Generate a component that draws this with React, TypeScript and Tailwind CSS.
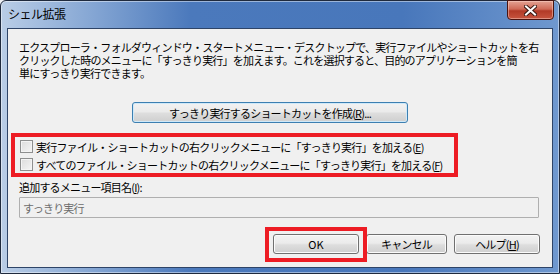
export default function App() {
  const font = "font-['MS_UI_Gothic','Noto_Sans_CJK_JP',sans-serif]";
  const btn =
    "h-[20px] rounded-[3px] border border-[#707070] bg-[linear-gradient(180deg,#f2f2f2_0%,#ebebeb_45%,#dddddd_55%,#cfcfcf_100%)] shadow-[inset_0_0_0_1px_#fbfbfb] leading-[12px] whitespace-nowrap";
  return (
    <div className={`w-[560px] h-[274px] bg-[#eef0f4] ${font}`}>
      {/* window frame */}
      <div className="relative h-full rounded-t-[6px] border border-[#1f2a3d] bg-[linear-gradient(90deg,#b9cde6_0%,#86a7d4_16%,#4b79bc_34%,#4877bb_72%,#6f98cf_100%)] shadow-[inset_0_0_0_1px_rgba(255,255,255,0.45)] flex flex-col">
        {/* title bar */}
        <div className="h-[27px] flex items-start shrink-0">
          <span className="pl-[7px] pt-[6px] text-[12px] leading-[14px] tracking-[-0.5px] text-black">シェル拡張</span>
          <div className="ml-auto mr-[5px] -mt-px w-[47px] h-[20px] rounded-b-[4px] border border-[#4a1410] bg-[linear-gradient(180deg,#e3a293_0%,#cf6a57_45%,#b23a27_55%,#c7553f_100%)] shadow-[inset_0_0_0_1px_rgba(255,220,210,0.45)] flex items-center justify-center">
            <svg width="13" height="11" viewBox="0 0 13 11">
              <path d="M2 1.5 L11 9.5 M11 1.5 L2 9.5" stroke="#3b1a14" strokeWidth="4" strokeLinecap="square" />
              <path d="M2 1.5 L11 9.5 M11 1.5 L2 9.5" stroke="#ffffff" strokeWidth="2" strokeLinecap="square" />
            </svg>
          </div>
        </div>

        {/* client area */}
        <div className="flex-1 mx-[6px] mb-[5px] border border-[#2e4467] bg-[#f0f0f0] text-[11px] tracking-[-0.8px] text-black flex flex-col">
          <p className="pl-[11px] pt-[12px] leading-[13px] whitespace-nowrap">
            エクスプローラ・フォルダウィンドウ・スタートメニュー・デスクトップで、実行ファイルやショートカットを右
            <br />
            クリックした時のメニューに「すっきり実行」を加えます。これを選択すると、目的のアプリケーションを簡
            <br />
            単にすっきり実行できます。
          </p>

          <div className="pl-[124px] mt-[22px]">
            <button className="w-[276px] h-[21px] rounded-[3px] border border-[#3c7fb1] bg-[linear-gradient(180deg,#f2f2f2_0%,#ebebeb_45%,#dddddd_55%,#cfcfcf_100%)] shadow-[inset_0_0_0_1px_#cfe9f9] leading-[12px] whitespace-nowrap">
              すっきり実行するショートカットを作成(<span className="underline">R</span>)...
            </button>
          </div>

          <div className="ml-[3px] mt-[10px] w-[447px] border-4 border-[#ed1c24] pl-[5px] pt-[3px] pb-[2px] flex flex-col gap-[5px]">
            {[
              ["実行ファイル・ショートカットの右クリックメニューに「すっきり実行」を加える(", "E"],
              ["すべてのファイル・ショートカットの右クリックメニューに「すっきり実行」を加える(", "F"],
            ].map(([label, key]) => (
              <label key={key} className="flex items-center gap-[3px] h-[13px]">
                <span className="w-[13px] h-[13px] border border-[#8e8f8f] bg-[linear-gradient(135deg,#dcdcdc_0%,#f5f5f5_100%)] shadow-[inset_0_0_0_1px_#f4f4f4] shrink-0" />
                <span className="leading-[12px] whitespace-nowrap">
                  {label}
                  <span className="underline">{key}</span>)
                </span>
              </label>
            ))}
          </div>

          <div className="pl-[11px] mt-[4px] leading-[12px] whitespace-nowrap">
            追加するメニュー項目名(<span className="underline">I</span>):
          </div>
          <div className="ml-[11px] mt-[4px] w-[520px] h-[21px] border border-[#afafaf] rounded-[1px] bg-[#f0f0f0] px-[3px] flex items-center text-[#6d6d6d] leading-[12px]">
            すっきり実行
          </div>

          <div className="flex justify-end gap-[7px] pr-[12px] mt-[16px]">
            <div className="relative">
              <div className="absolute -left-[8px] -top-[7px] -right-[8px] -bottom-[8px] border-4 border-[#ed1c24]" />
              <button className={`w-[86px] tracking-normal ${btn}`}>OK</button>
            </div>
            <button className={`w-[81px] ${btn}`}>キャンセル</button>
            <button className={`w-[86px] ${btn}`}>
              ヘルプ(<span className="underline">H</span>)
            </button>
          </div>
        </div>
      </div>
    </div>
  );
}
